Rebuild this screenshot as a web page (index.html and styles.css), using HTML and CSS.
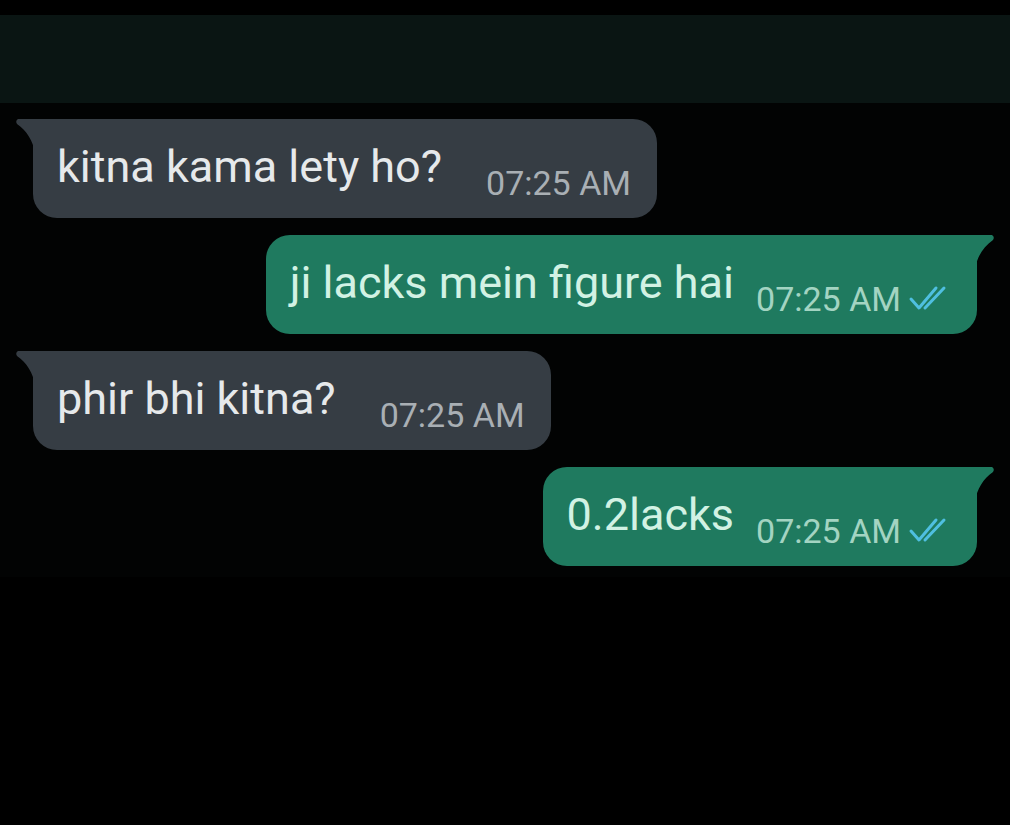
FILE: index.html
```html
<!DOCTYPE html>
<html lang="en">
<head>
<meta charset="utf-8">
<title>Chat</title>
<link rel="stylesheet" href="styles.css">
</head>
<body>
<div class="screen">
  <div class="top-strip"></div>
  <header class="app-bar"></header>
  <main class="chat">
    <div class="row in">
      <div class="bubble in">
        <span class="text">kitna kama lety ho?</span>
        <span class="meta"><span class="time">07:25 AM</span></span>
      </div>
    </div>
    <div class="row out">
      <div class="bubble out">
        <span class="text">ji lacks mein figure hai</span>
        <span class="meta"><span class="time">07:25 AM</span>
          <svg class="ticks" viewBox="0 0 44 26" width="44" height="26"><polyline points="5,14 13,23 30,3" /><line x1="19" y1="23" x2="38" y2="3" /></svg>
        </span>
      </div>
    </div>
    <div class="row in">
      <div class="bubble in">
        <span class="text">phir bhi kitna?</span>
        <span class="meta"><span class="time">07:25 AM</span></span>
      </div>
    </div>
    <div class="row out">
      <div class="bubble out">
        <span class="text">0.2lacks</span>
        <span class="meta"><span class="time">07:25 AM</span>
          <svg class="ticks" viewBox="0 0 44 26" width="44" height="26"><polyline points="5,14 13,23 30,3" /><line x1="19" y1="23" x2="38" y2="3" /></svg>
        </span>
      </div>
    </div>
  </main>
</div>
</body>
</html>
```
FILE: styles.css
```css
html, body {
  margin: 0;
  padding: 0;
  background: #000;
}
body {
  width: 1010px;
  height: 825px;
  overflow: hidden;
  font-family: Roboto, "Noto Sans", sans-serif;
}
.top-strip {
  height: 15px;
  background: #000;
}
.app-bar {
  height: 88px;
  background: #0a1513;
}
.chat {
  display: flex;
  flex-direction: column;
  gap: 17px;
  padding: 16px 33px 0;
  height: 458px;
  background: #020303;
}
.row {
  display: flex;
}
.row.out {
  justify-content: flex-end;
}
.bubble {
  position: relative;
  display: flex;
  align-items: flex-end;
  height: 99px;
  box-sizing: border-box;
  padding: 22px 26px 18px 24px;
  border-radius: 24px;
}
.bubble.in {
  background: #363d44;
  border-top-left-radius: 0;
}
.bubble.out {
  background: #1f7a5f;
  border-top-right-radius: 0;
  padding-left: 24px;
  padding-right: 27px;
}
.bubble::before {
  content: "";
  position: absolute;
  top: 0;
  width: 20px;
  height: 34px;
  background: inherit;
}
.bubble.in::before {
  left: -18px;
  clip-path: path("M3 0 H20 V34 C18 22 12 12 2 5 Q0 2 3 0 Z");
}
.bubble.out::before {
  right: -18px;
  clip-path: path("M17 0 H0 V34 C2 22 8 12 18 5 Q20 2 17 0 Z");
}
.text {
  font-size: 45px;
  line-height: 52px;
  margin-bottom: 7px;
  white-space: nowrap;
}
.bubble.in .text {
  color: #e6e9eb;
}
.bubble.out .text {
  color: #d2f2e4;
}
.meta {
  display: flex;
  align-items: center;
  white-space: nowrap;
}
.bubble.in .meta {
  margin-left: 44px;
}
.bubble.out .meta {
  margin-left: 22px;
}
.time {
  font-size: 34px;
  line-height: 34px;
}
.bubble.in .time {
  color: #a9afb4;
}
.bubble.out .time {
  color: #a3d4c2;
}
.ticks {
  margin-left: 5px;
  margin-bottom: 3px;
  fill: none;
  stroke: #4fbfe0;
  stroke-width: 3;
  stroke-linecap: round;
  stroke-linejoin: round;
}
```
